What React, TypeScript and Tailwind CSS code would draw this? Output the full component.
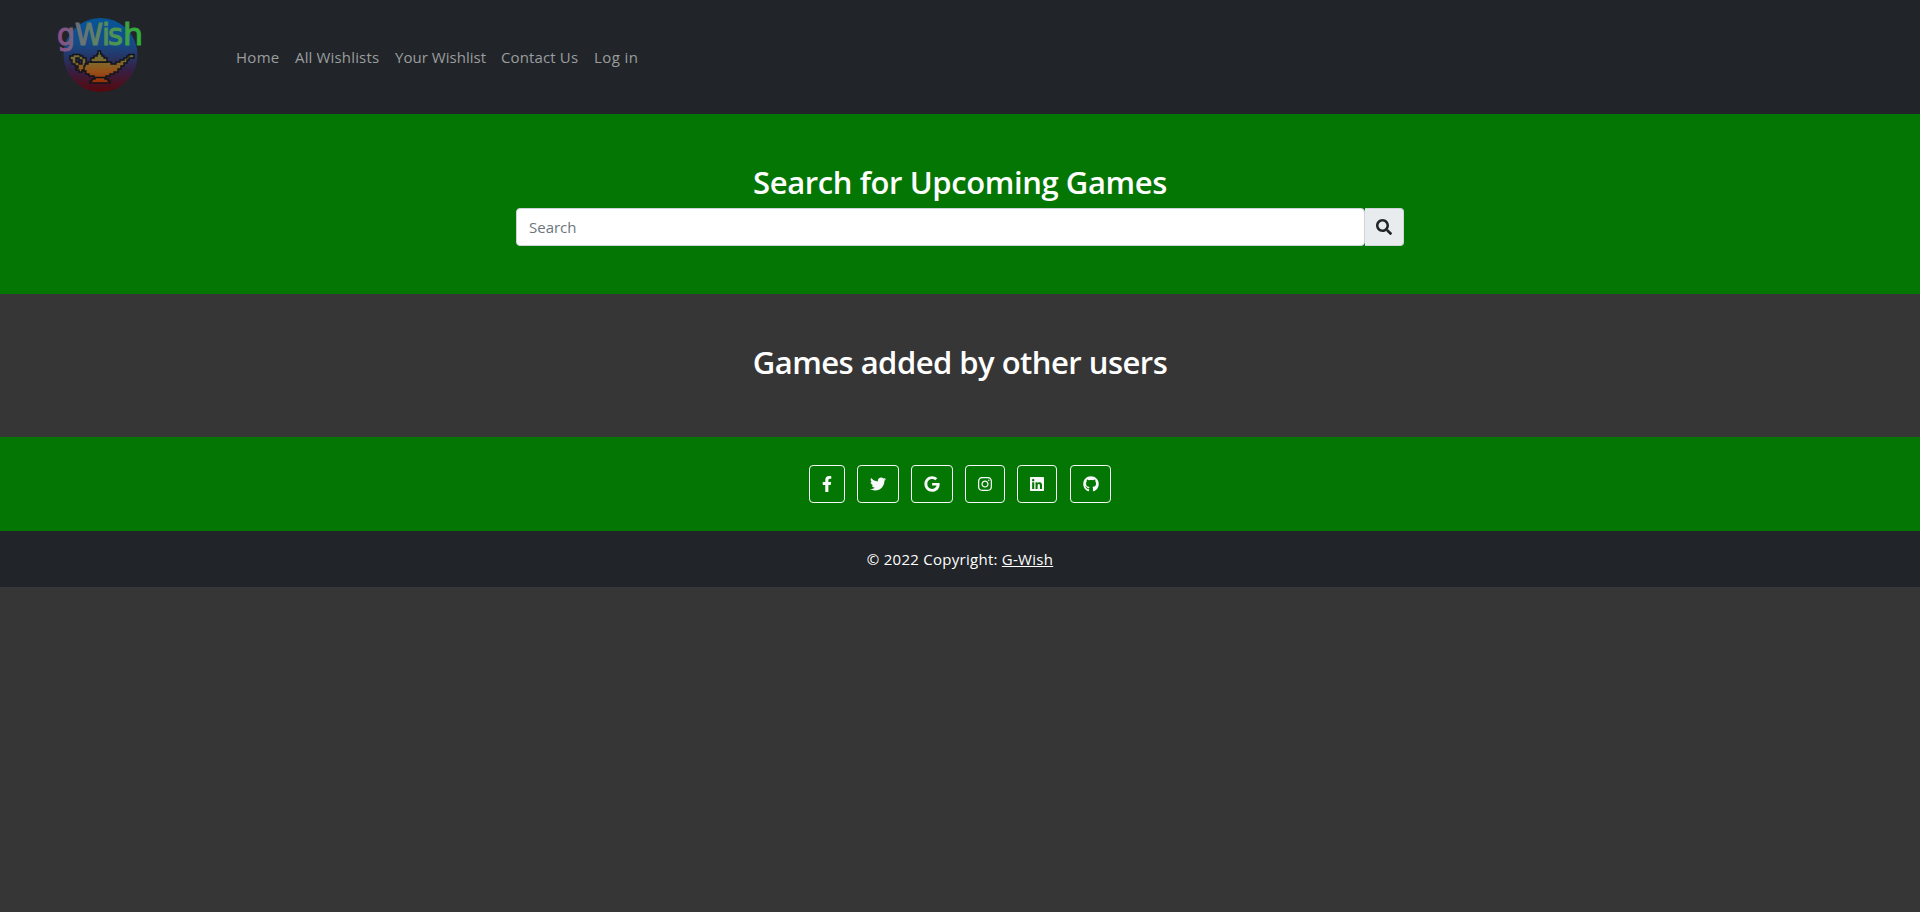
import { FaFacebookF, FaTwitter, FaGoogle, FaInstagram, FaLinkedin, FaGithub, FaSearch } from "react-icons/fa";

const letters = [
  { ch: "g", x: 17, w: 18 },
  { ch: "W", x: 35, w: 28 },
  { ch: "i", x: 62, w: 8 },
  { ch: "s", x: 68, w: 15 },
  { ch: "h", x: 83, w: 20 },
];

function Logo() {
  return (
    <svg width="120" height="114" viewBox="0 0 120 114" className="block shrink-0">
      <defs>
        <linearGradient id="ball" x1="0" y1="0" x2="0" y2="1">
          <stop offset="0" stopColor="#06559a" />
          <stop offset="0.35" stopColor="#164a86" />
          <stop offset="0.7" stopColor="#352044" />
          <stop offset="1" stopColor="#57080c" />
        </linearGradient>
        <linearGradient id="word" gradientUnits="userSpaceOnUse" x1="18" y1="0" x2="101" y2="0">
          <stop offset="0" stopColor="#8e4a8a" />
          <stop offset="0.25" stopColor="#6c7078" />
          <stop offset="0.5" stopColor="#5c8560" />
          <stop offset="1" stopColor="#2fae38" />
        </linearGradient>
        <linearGradient id="gold" gradientUnits="userSpaceOnUse" x1="0" y1="51" x2="0" y2="83">
          <stop offset="0" stopColor="#6a7440" />
          <stop offset="0.35" stopColor="#80682a" />
          <stop offset="0.65" stopColor="#985018" />
          <stop offset="1" stopColor="#962c08" />
        </linearGradient>
      </defs>
      <circle cx="60.5" cy="55" r="37" fill="url(#ball)" />
      <g fontSize="30" fill="url(#word)" stroke="url(#word)" strokeWidth="1.1" className="font-['DejaVu_Sans',sans-serif]">
        {letters.map((l) => (
          <text key={l.ch} x={l.x} y="44.5" textLength={l.w} lengthAdjust="spacingAndGlyphs">{l.ch}</text>
        ))}
      </g>
      <g stroke="#11131b" strokeWidth="1.4" fill="url(#gold)" strokeLinejoin="miter">
        <path fillRule="evenodd" d="M46 63 V58 H43 V56 H40 V54.5 H33 V56 H30 V60 H32 V64 H35 V66 H38 V68 H36 V70 H39 V72 H42 V70 H45ZM42 64 H39 V62 H36 V58 H39 V60 H42Z" />
        <path d="M55 77 V79 H52 V81 H50 V83 H70 V81 H68 V79 H65 V77Z" />
        <path d="M45 66 V64 H48 V62 H71 V64 H76 V62 H80 V60 H84 V58 H87 V56 H89 V54.5 H94 V58 H89 V60 H87 V63 H84 V66 H81 V69 H78 V72 H74 V74 H70 V76 H66 V77.5 H54 V76 H49 V74 H46 V71 H44 V66Z" />
        <path d="M51 62 V58 H54 V56 H57 V54 H58 V51 H60.5 V54 H62 V56 H64 V58 H67 V62Z" />
      </g>
    </svg>
  );
}

const links = [
  { label: "Home", box: "w-[59px] tracking-[0.3px]" },
  { label: "All Wishlists", box: "w-[100px] tracking-[0.16px]" },
  { label: "Your Wishlist", box: "w-[106px] tracking-[0.03px]" },
  { label: "Contact Us", box: "w-[93px] tracking-[0.13px]" },
  { label: "Log in", box: "w-[60px] tracking-[0.4px]" },
];

const social = [
  { Icon: FaFacebookF, label: "Facebook", box: "w-9" },
  { Icon: FaTwitter, label: "Twitter", box: "w-[42px]" },
  { Icon: FaGoogle, label: "Google", box: "w-[42px]" },
  { Icon: FaInstagram, label: "Instagram", box: "w-10" },
  { Icon: FaLinkedin, label: "LinkedIn", box: "w-10" },
  { Icon: FaGithub, label: "GitHub", box: "ml-px w-[41px]" },
];

export default function App() {
  return (
    <div className="min-h-screen bg-[#363636] font-['Open_Sans',sans-serif] text-base text-white">
      <nav className="flex h-[114px] items-center bg-[#212529] pl-10">
        <Logo />
        <div className="ml-[76px] flex text-[15px] leading-6 text-[#9b9d9e]">
          {links.map((l) => (
            <a key={l.label} href="#" className={`${l.box} whitespace-nowrap`}>{l.label}</a>
          ))}
        </div>
      </nav>
      <section className="flex h-[180px] flex-col items-center bg-[#047604] pt-[49px]">
        <h2 className="mb-[7px] text-[31px] font-semibold leading-[38px] tracking-[-0.4px]">Search for Upcoming Games</h2>
        <div className="flex h-[38px] w-[888px]">
          <input placeholder="Search" className="h-[38px] flex-1 rounded border border-[#ced4da] bg-white px-3 text-[15px] placeholder:text-[#6c757d]" />
          <button aria-label="Search" className="flex w-[39px] items-center justify-center rounded-r border border-l-0 border-[#ced4da] bg-[#e9ecef] text-[#212529]"><FaSearch size={16} /></button>
        </div>
      </section>
      <section className="flex h-[143px] justify-center pt-[49px]">
        <h2 className="text-[31px] font-semibold leading-[38px] tracking-[-0.52px]">Games added by other users</h2>
      </section>
      <footer>
        <div className="flex h-[94px] justify-center gap-3 bg-[#047604] pt-7">
          {social.map(({ Icon, label, box }) => (
            <a key={label} href="#" aria-label={label} className={`${box} flex h-[38px] items-center justify-center rounded border border-[#f8f9fa] text-[#f8f9fa]`}><Icon size={16} /></a>
          ))}
        </div>
        <div className="flex h-14 items-center justify-center gap-1 bg-[#212529] text-[15px] tracking-[0.28px]">
          <span>© 2022 Copyright:</span>
          <a href="#" className="underline">G-Wish</a>
        </div>
      </footer>
    </div>
  );
}
